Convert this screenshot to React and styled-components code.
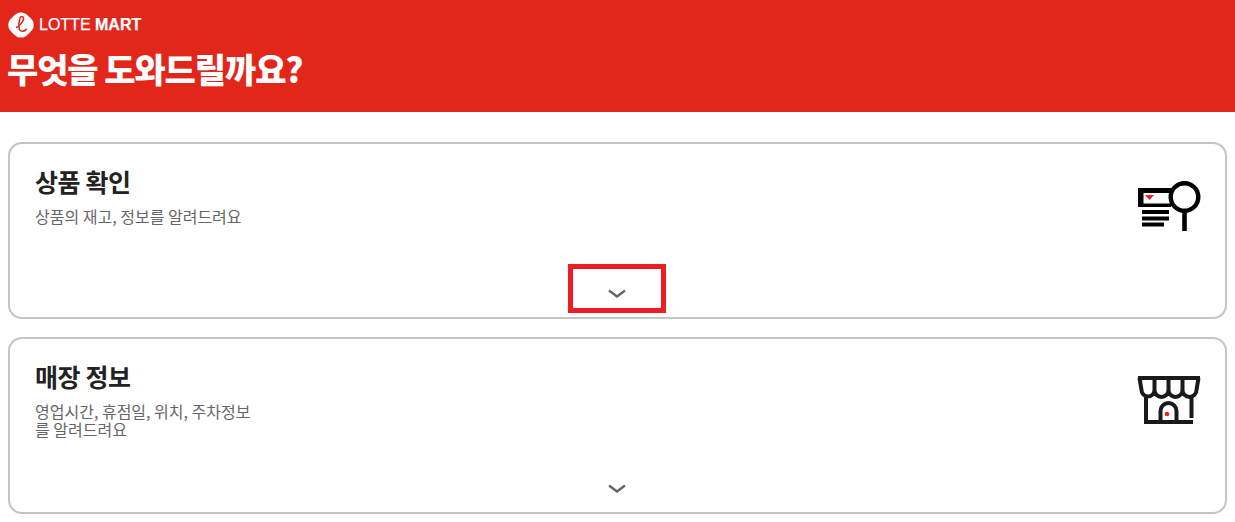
import styled, { createGlobalStyle } from "styled-components";

const GlobalStyle = createGlobalStyle`
  html, body {
    margin: 0;
    padding: 0;
    background: #fff;
    font-family: "Noto Sans CJK KR", "Noto Sans", sans-serif;
  }
`;

// logo
const LogoMark = () => (
  <svg width="26" height="26" viewBox="0 0 27 27">
    <path
      d="M13.5 0.5 C18 0.5 20 3 22.5 5.5 C25 8 26.7 9.5 26.7 13.5 C26.7 17.5 25 19 22.5 21.5 C20 24 18 26.5 13.5 26.5 C9 26.5 7 24 4.5 21.5 C2 19 0.3 17.5 0.3 13.5 C0.3 9.5 2 8 4.5 5.5 C7 3 9 0.5 13.5 0.5 Z"
      fill="#fff"
    />
    <path
      d="M9 16 C13 13 17 9 16 6 C15.5 4 13 4 12.2 6.8 C11.2 10 11 15 11.8 18 C12.5 20.5 16 21 19 18"
      fill="none"
      stroke="#e2261a"
      strokeWidth="1.6"
      strokeLinecap="round"
    />
  </svg>
);

const ProductIcon = () => (
  <svg width="64" height="52" viewBox="0 0 64 52">
    <path d="M34 8 H1 V27 H34 V23.5 H6.5 V13 H34 Z" fill="#000" />
    <path d="M8 15 H17 L12.5 20 Z" fill="#e2262a" />
    <circle cx="47.5" cy="17" r="13.8" fill="none" stroke="#000" strokeWidth="4.4" />
    <path d="M47.5 31 V51" stroke="#000" strokeWidth="4.6" />
    <path d="M5 32 H32 M5 38.5 H32 M5 44.5 H27" stroke="#000" strokeWidth="3.8" />
  </svg>
);

const StoreIcon = () => (
  <svg width="64" height="52" viewBox="0 0 64 52">
    <path
      d="M1 3 H63 M2.5 3 L4.5 15 A6.5 6.5 0 0 0 17.5 15 V3 M17.5 15 A7 7 0 0 0 31.5 15 V3 M31.5 15 A7 7 0 0 0 45.5 15 V3 M45.5 15 A7 7 0 0 0 59.5 15 L61.5 3"
      fill="none"
      stroke="#1a1a1a"
      strokeWidth="4"
    />
    <path d="M9 20 V47 H56 M54.5 21 V43" fill="none" stroke="#1a1a1a" strokeWidth="4" />
    <path d="M23.5 47 V36 A8 8 0 0 1 39.5 36 V47" fill="none" stroke="#1a1a1a" strokeWidth="4" />
    <circle cx="30" cy="39" r="2.3" fill="#e2262a" />
  </svg>
);

const Chevron = () => (
  <svg width="18" height="10" viewBox="0 0 18 10">
    <path d="M1 1.5 L9 7.5 L17 1.5" fill="none" stroke="#666" strokeWidth="2.4" />
  </svg>
);

const MENUS = [
  {
    title: "상품 확인",
    desc: "상품의 재고, 정보를 알려드려요",
    icon: <ProductIcon />,
    marked: true,
  },
  {
    title: "매장 정보",
    desc: "영업시간, 휴점일, 위치, 주차정보를 알려드려요",
    icon: <StoreIcon />,
    marked: false,
  },
];

const App = () => {
  return (
    <>
      <GlobalStyle />
      <Header>
        <Logo>
          <LogoMark />
          <LogoText>
            LOTTE <b>MART</b>
          </LogoText>
        </Logo>
        <Heading>무엇을 도와드릴까요?</Heading>
      </Header>
      <CardList>
        {MENUS.map((menu) => (
          <Card key={menu.title}>
            <CardBody>
              <div>
                <CardTitle>{menu.title}</CardTitle>
                <CardDesc>{menu.desc}</CardDesc>
              </div>
              <IconSlot>{menu.icon}</IconSlot>
            </CardBody>
            <ToggleButton $marked={menu.marked} aria-label="펼치기">
              <Chevron />
            </ToggleButton>
          </Card>
        ))}
      </CardList>
    </>
  );
};

const Header = styled.header`
  height: 112px;
  box-sizing: border-box;
  padding: 12px 8px 0;
  background-color: #e2261a;
  color: #fff;
`;
const Logo = styled.div`
  display: flex;
  align-items: center;
  gap: 5px;
  height: 26px;
`;
const LogoText = styled.span`
  font-family: "Liberation Sans", Arial, sans-serif;
  font-size: 16px;
  font-weight: 400;
  -webkit-text-stroke: 0.25px #fff;
  b {
    font-weight: 700;
  }
`;
const Heading = styled.h1`
  margin: 9px 0 0 -1px;
  font-size: 34px;
  line-height: 44px;
  font-weight: 900;
  letter-spacing: -1.1px;
`;
const CardList = styled.main`
  display: flex;
  flex-direction: column;
  gap: 18px;
  padding: 30px 8px 0 8px;
`;
const Card = styled.section`
  height: 177px;
  box-sizing: border-box;
  display: flex;
  flex-direction: column;
  border: 2px solid #c4c4c4;
  border-radius: 14px;
  background: #fff;
`;
const CardBody = styled.div`
  flex: 1;
  display: flex;
  justify-content: space-between;
  padding: 19px 24px 0 25px;
`;
const CardTitle = styled.h2`
  margin: 0;
  font-size: 25px;
  line-height: 36px;
  font-weight: 700;
  color: #222;
  letter-spacing: -0.4px;
`;
const CardDesc = styled.p`
  margin: 8px 0 0;
  width: 222px;
  font-size: 16px;
  line-height: 18px;
  color: #666;
  word-break: break-all;
`;
const IconSlot = styled.div`
  margin-top: 17px;
  height: 52px;
`;
const ToggleButton = styled.button`
  align-self: center;
  width: 98px;
  height: 49px;
  margin: 0 2px 4px 0;
  padding: 11px 0 0;
  box-sizing: border-box;
  background: none;
  border: 5px solid ${(p) => (p.$marked ? "#ee1c25" : "transparent")};
  display: flex;
  align-items: center;
  justify-content: center;
`;

export default App;
